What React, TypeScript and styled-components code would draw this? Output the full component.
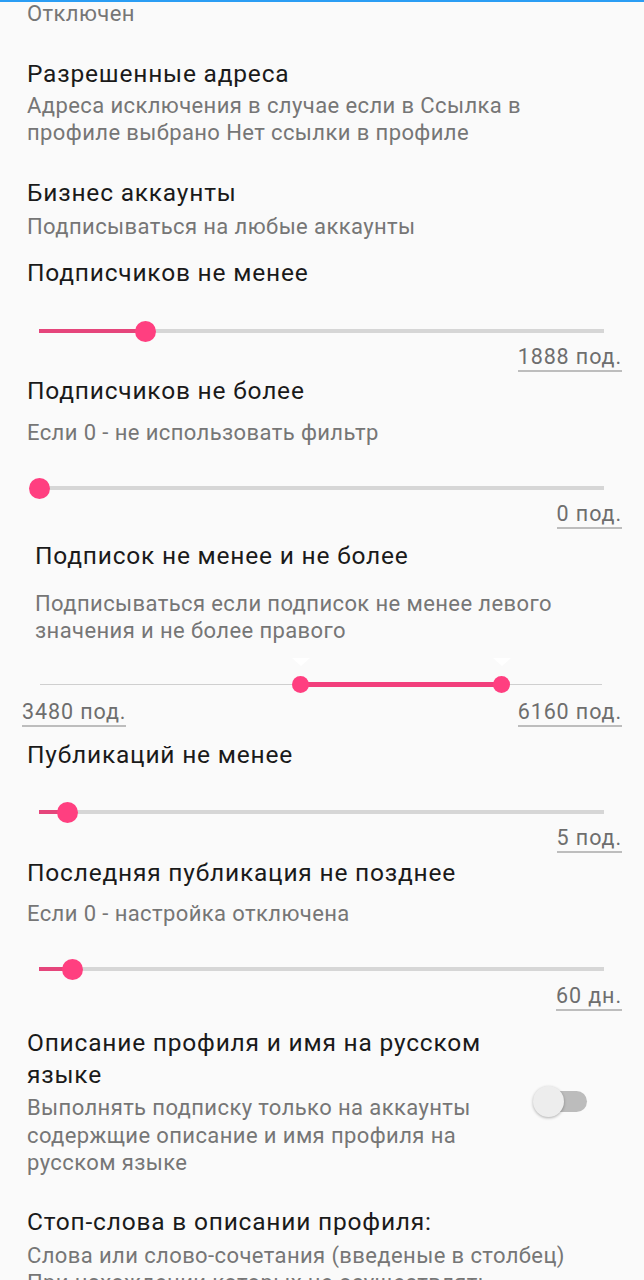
import styled, { createGlobalStyle } from "styled-components";

const GlobalStyle = createGlobalStyle`
  html, body {
    margin: 0;
    padding: 0;
    background: #fafafa;
  }
  body {
    font-family: Roboto, "Noto Sans", "Liberation Sans", sans-serif;
    -webkit-font-smoothing: antialiased;
  }
`;

const Screen = styled.div`
  width: 644px;
  height: 1280px;
  overflow: hidden;
  box-sizing: border-box;
  background: #fafafa;
  border-top: 2px solid #2a9df4;
`;

const Pref = styled.div<{ $indent?: number }>`
  padding: 0 14px 0 ${(p) => p.$indent ?? 27}px;
`;

const Title = styled.div<{ $mt: number }>`
  margin-top: ${(p) => p.$mt}px;
  font-size: 24.5px;
  letter-spacing: 0.8px;
  line-height: 32px;
  color: #1a1a1a;
`;

const Summary = styled.div<{ $mt: number; $lh?: number }>`
  margin-top: ${(p) => p.$mt}px;
  font-size: 22px;
  letter-spacing: 0.4px;
  line-height: ${(p) => p.$lh ?? 27}px;
  color: #767676;
  white-space: nowrap;
`;

const SliderRow = styled.div<{ $mt: number }>`
  margin-top: ${(p) => p.$mt}px;
  height: 24px;
  padding: 0 40px 0 39px;
  display: flex;
  align-items: center;
`;

const Track = styled.div`
  position: relative;
  flex: 1;
  height: 4px;
  background: #d6d6d6;
`;

const Fill = styled.div`
  position: absolute;
  left: 0;
  top: 0;
  bottom: 0;
  background: #e5457b;
`;

const Thumb = styled.div<{ $size: number }>`
  position: absolute;
  top: 50%;
  width: ${(p) => p.$size}px;
  height: ${(p) => p.$size}px;
  margin: ${(p) => -p.$size / 2}px 0 0 ${(p) => -p.$size / 2}px;
  border-radius: 50%;
  background: #ff3f80;
`;

const ValueRow = styled.div<{ $mt: number; $spread?: boolean }>`
  margin-top: ${(p) => p.$mt}px;
  display: flex;
  justify-content: ${(p) => (p.$spread ? "space-between" : "flex-end")};
  padding: 0 22px;
`;

const ValueLabel = styled.span`
  font-size: 21.5px;
  letter-spacing: 0.9px;
  line-height: 24px;
  color: #6e6e6e;
  padding-bottom: 1px;
  border-bottom: 2px solid #bdbdbd;
`;

const RangeRow = styled.div<{ $mt: number }>`
  margin-top: ${(p) => p.$mt}px;
  height: 24px;
  padding: 0 42px 0 40px;
  display: flex;
  align-items: center;
`;

const RangeLine = styled.div`
  position: relative;
  flex: 1;
  height: 1px;
  background: #cfcfcf;
`;

const RangeFill = styled.div`
  position: absolute;
  top: -2px;
  height: 5px;
  background: #f23f7c;
`;

const Marker = styled.div`
  position: absolute;
  top: -26px;
  width: 0;
  height: 0;
  margin-left: -9px;
  border-left: 9px solid transparent;
  border-right: 9px solid transparent;
  border-top: 8px solid #ffffff;
`;

const SwitchPref = styled.div<{ $mt: number }>`
  margin-top: ${(p) => p.$mt}px;
  display: flex;
  align-items: center;
  padding: 0 57px 0 27px;
`;

const SwitchText = styled.div`
  width: 494px;
  & > div {
    white-space: normal;
  }
`;

const Switch = styled.div`
  position: relative;
  margin-left: auto;
  width: 50px;
  height: 21px;
  border-radius: 11px;
  background: #bcbcbc;
`;

const SwitchKnob = styled.div`
  position: absolute;
  left: -4px;
  top: -5px;
  width: 31px;
  height: 31px;
  border-radius: 50%;
  background: #ededed;
  box-shadow: 0 1px 3px rgba(0, 0, 0, 0.3);
`;

function Slider({ value, max, mt }: { value: number; max: number; mt: number }) {
  const pct = `${(value / max) * 100}%`;
  return (
    <SliderRow $mt={mt}>
      <Track>
        <Fill style={{ width: pct }} />
        <Thumb $size={21} style={{ left: pct }} />
      </Track>
    </SliderRow>
  );
}

function RangeSlider({ from, to, max, mt }: { from: number; to: number; max: number; mt: number }) {
  const a = (from / max) * 100;
  const b = (to / max) * 100;
  return (
    <RangeRow $mt={mt}>
      <RangeLine>
        <RangeFill style={{ left: `${a}%`, width: `${b - a}%` }} />
        <Marker style={{ left: `${a}%` }} />
        <Marker style={{ left: `${b}%` }} />
        <Thumb $size={17} style={{ left: `${a}%` }} />
        <Thumb $size={17} style={{ left: `${b}%` }} />
      </RangeLine>
    </RangeRow>
  );
}

export default function App() {
  return (
    <Screen>
      <GlobalStyle />
      <Pref>
        <Summary $mt={-2}>Отключен</Summary>
        <Title $mt={31}>Разрешенные адреса</Title>
        <Summary $mt={2}>
          Адреса исключения в случае если в Ссылка в
          <br />
          профиле выбрано Нет ссылки в профиле
        </Summary>
        <Title $mt={31}>Бизнес аккаунты</Title>
        <Summary $mt={4}>Подписываться на любые аккаунты</Summary>
        <Title $mt={17}>Подписчиков не менее</Title>
      </Pref>
      <Slider value={1888} max={10000} mt={30} />
      <ValueRow $mt={2}>
        <ValueLabel>1888 под.</ValueLabel>
      </ValueRow>

      <Pref>
        <Title $mt={3}>Подписчиков не более</Title>
        <Summary $mt={12}>Если 0 - не использовать фильтр</Summary>
      </Pref>
      <Slider value={0} max={10000} mt={30} />
      <ValueRow $mt={2}>
        <ValueLabel>0 под.</ValueLabel>
      </ValueRow>

      <Pref $indent={35}>
        <Title $mt={11}>Подписок не менее и не более</Title>
        <Summary $mt={18}>
          Подписываться если подписок не менее левого
          <br />
          значения и не более правого
        </Summary>
      </Pref>
      <RangeSlider from={3480} to={6160} max={7500} mt={28} />
      <ValueRow $mt={4} $spread>
        <ValueLabel>3480 под.</ValueLabel>
        <ValueLabel>6160 под.</ValueLabel>
      </ValueRow>

      <Pref>
        <Title $mt={12}>Публикаций не менее</Title>
      </Pref>
      <Slider value={5} max={100} mt={29} />
      <ValueRow $mt={2}>
        <ValueLabel>5 под.</ValueLabel>
      </ValueRow>

      <Pref>
        <Title $mt={4}>Последняя публикация не позднее</Title>
        <Summary $mt={11}>Если 0 - настройка отключена</Summary>
      </Pref>
      <Slider value={60} max={1000} mt={30} />
      <ValueRow $mt={3}>
        <ValueLabel>60 дн.</ValueLabel>
      </ValueRow>

      <SwitchPref $mt={16}>
        <SwitchText>
          <Title $mt={0}>Описание профиля и имя на русском языке</Title>
          <Summary $mt={3} $lh={27.5}>
            Выполнять подписку только на аккаунты содержщие описание и имя профиля на
            русском языке
          </Summary>
        </SwitchText>
        <Switch>
          <SwitchKnob />
        </Switch>
      </SwitchPref>

      <Pref>
        <Title $mt={29}>Стоп-слова в описании профиля:</Title>
        <Summary $mt={4}>
          Слова или слово-сочетания (введеные в столбец)
          <br />
          При нахождении которых не осуществлять
        </Summary>
      </Pref>
    </Screen>
  );
}
